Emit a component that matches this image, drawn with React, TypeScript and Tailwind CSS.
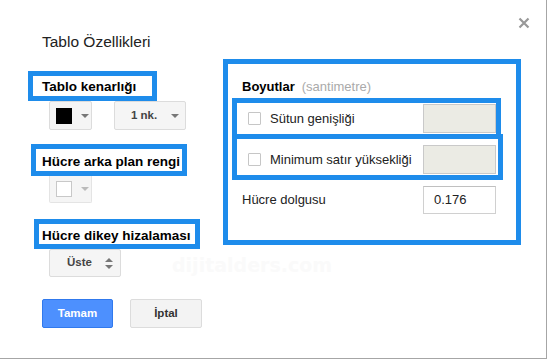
import React from 'react';

const FONT = { fontFamily: '"Liberation Sans", Arial, sans-serif' };

const Arrow = ({ faded }: { faded?: boolean }) => (
  <span
    className={`inline-block w-0 h-0 border-x-[4px] border-t-[4px] border-x-transparent ${faded ? 'border-t-[#bbb]' : 'border-t-[#777]'}`}
  />
);

const Label = ({ text, className }: { text: string; className: string }) => (
  <div className={`border-[5px] border-[#1e8ceb] bg-white font-bold text-[13.5px] leading-[20px] text-black whitespace-nowrap ${className}`}>
    {text}
  </div>
);

const CheckRow = ({ label }: { label: string }) => (
  <div className="flex items-center w-full">
    <span className="w-[13px] h-[13px] border border-[#c6c6c6] bg-white rounded-[1px]" />
    <span className="ml-[9px] text-[13px] text-[#222]">{label}</span>
    <span className="ml-auto w-[73px] h-[29px] bg-[#ebebe4] border border-[#c9c9c9]" />
  </div>
);

export default function App() {
  return (
    <div style={FONT} className="relative w-[547px] h-[359px] bg-white border-r border-b border-[#a6a6a6] overflow-hidden">
      <div className="pt-[33px] pl-[42px] text-[15.5px] leading-[18px] text-[#222]">Tablo Özellikleri</div>

      <svg className="absolute left-[518px] top-[17px]" width="12" height="12" viewBox="0 0 12 12">
        <path d="M1.5 1.5 L10.5 10.5 M10.5 1.5 L1.5 10.5" stroke="#999" strokeWidth="2.2" />
      </svg>

      {/* faint watermark */}
      <div className="absolute left-[172px] top-[251px] text-[19px] font-bold text-[#fafafa] select-none" style={{ fontFamily: '"DejaVu Sans", sans-serif' }}>
        dijitalders.com
      </div>

      <div className="relative flex mt-[8px] pl-[28px]">
        {/* left column */}
        <div className="w-[195px] pt-[12px] flex flex-col items-start">
          <Label text="Tablo kenarlığı" className="w-[129px] h-[30px] pt-[1px] pl-[9px]" />
          <div className="flex ml-[21px] gap-[22px]">
            <div className="w-[43px] h-[29px] flex items-center pl-[6px] gap-[9px] bg-[#f5f5f5] border border-[#dcdcdc] rounded-[2px]">
              <span className="w-[16px] h-[16px] bg-black" />
              <Arrow />
            </div>
            <div className="w-[72px] h-[29px] flex items-center pl-[16px] pr-[6px] bg-[#f5f5f5] border border-[#dcdcdc] rounded-[2px]">
              <span className="text-[11.5px] font-bold text-[#444]">1 nk.</span>
              <span className="ml-auto flex"><Arrow /></span>
            </div>
          </div>

          <Label text="Hücre arka plan rengi" className="mt-[14px] ml-[3px] w-[156px] h-[32px] pt-[3px] pl-[6px]" />
          <div className="ml-[21px] w-[43px] h-[27px] flex items-center pl-[6px] gap-[9px] bg-[#f5f5f5] border border-[#e4e4e4] border-t-0 rounded-b-[2px]">
            <span className="w-[16px] h-[16px] bg-white border border-[#c8c8c8]" />
            <Arrow faded />
          </div>

          <Label text="Hücre dikey hizalaması" className="mt-[16px] ml-[6px] w-[166px] h-[30px] pt-[2px] pl-[3px]" />
          <div className="ml-[21px] w-[72px] h-[28px] flex items-center pl-[17px] pr-[7px] bg-[#f5f5f5] border border-[#dcdcdc] rounded-[2px]">
            <span className="text-[11.5px] font-bold text-[#444]">Üste</span>
            <span className="ml-auto flex flex-col items-center gap-[3px]">
              <span className="w-0 h-0 border-x-[4px] border-b-[4px] border-x-transparent border-b-[#777]" />
              <span className="w-0 h-0 border-x-[4px] border-t-[4px] border-x-transparent border-t-[#777]" />
            </span>
          </div>
        </div>

        {/* right column */}
        <div className="w-[298px] h-[186px] border-[5px] border-[#1e8ceb] pl-[4px] pt-[15px] flex flex-col">
          <div className="ml-[10px] text-[13px] leading-[16px] whitespace-nowrap">
            <span className="font-bold text-black">Boyutlar</span>
            <span className="ml-[7px] text-[#aaa]">(santimetre)</span>
          </div>
          <div className="mt-[3px] w-[269px] h-[41px] border-[5px] border-[#1e8ceb] pl-[11px] pt-[1px] flex items-start">
            <CheckRow label="Sütun genişliği" />
          </div>
          <div className="-mt-[5px] w-[271px] h-[46px] border-[5px] border-[#1e8ceb] pl-[11px] pr-[2px] pt-[6px] flex items-start">
            <CheckRow label="Minimum satır yüksekliği" />
          </div>
          <div className="mt-[6px] ml-[10px] w-[254px] flex items-center justify-between">
            <span className="text-[13px] text-[#222]">Hücre dolgusu</span>
            <span className="w-[73px] h-[28px] border border-[#d0d0d0] border-t-[#c0c0c0] pl-[10px] flex items-center text-[13px] text-[#222]">0.176</span>
          </div>
        </div>
      </div>

      <div className="relative flex gap-[17px] pl-[42px] mt-[22px]">
        <div className="w-[71px] h-[29px] flex items-center justify-center bg-[#4d90fe] border border-[#3079ed] rounded-[2px] text-white text-[11.5px] font-bold">
          Tamam
        </div>
        <div className="w-[72px] h-[29px] flex items-center justify-center bg-[#f3f3f3] border border-[#dcdcdc] rounded-[2px] text-[#333] text-[11.5px] font-bold">
          İptal
        </div>
      </div>
    </div>
  );
}
